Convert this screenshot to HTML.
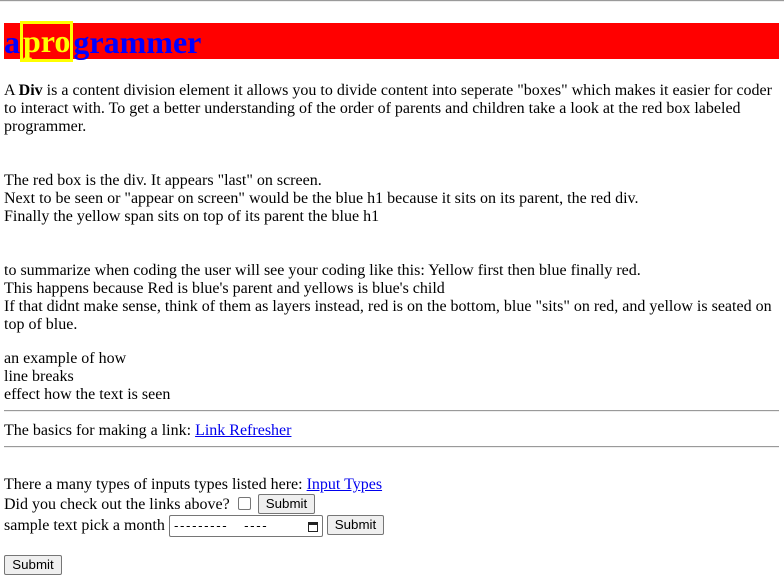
<!DOCTYPE html>
<html><head><style>
body{margin:0;width:784px;height:583px;position:relative;font-family:"Liberation Serif",serif;font-size:16px;color:#000;background:#fff;overflow:hidden}
.l{position:absolute;left:4px;white-space:nowrap;line-height:18px;margin-top:1px}
.hr{position:absolute;left:4px;width:775px;height:0;border-top:1px solid #9a9a9a;border-bottom:1px solid #eee}
a{color:#0000ee;text-decoration:underline}
.btn{position:absolute;font-family:"Liberation Sans",sans-serif;font-size:13.3px;background:#efefef;border:1px solid #767676;border-radius:2px;height:20px;box-sizing:border-box;text-align:center;line-height:18px;color:#000}
</style></head><body>
<div class="hr" style="top:0;left:0;width:784px"></div>
<div style="position:absolute;left:4px;top:23px;width:775px;height:36px;background:#f00"></div>
<div style="position:absolute;left:4px;top:21px;font:bold 32px 'Liberation Serif',serif;color:#00f;line-height:42px;white-space:nowrap">a<span style="display:inline-block;border:3px solid #ff0;color:#ff0;line-height:34px;box-sizing:border-box;height:41px;vertical-align:top">pro</span>grammer</div>
<div class="l" style="top:81px">A <b>Div</b> is a content division element it allows you to divide content into seperate "boxes" which makes it easier for coder</div>
<div class="l" style="top:99px">to interact with. To get a better understanding of the order of parents and children take a look at the red box labeled</div>
<div class="l" style="top:117px">programmer.</div>
<div class="l" style="top:171px">The red box is the div. It appears "last" on screen.</div>
<div class="l" style="top:189px">Next to be seen or "appear on screen" would be the blue h1 because it sits on its parent, the red div.</div>
<div class="l" style="top:207px">Finally the yellow span sits on top of its parent the blue h1</div>
<div class="l" style="top:261px">to summarize when coding the user will see your coding like this: Yellow first then blue finally red.</div>
<div class="l" style="top:279px">This happens because Red is blue's parent and yellows is blue's child</div>
<div class="l" style="top:297px">If that didnt make sense, think of them as layers instead, red is on the bottom, blue "sits" on red, and yellow is seated on</div>
<div class="l" style="top:315px">top of blue.</div>
<div class="l" style="top:349px">an example of how</div>
<div class="l" style="top:367px">line breaks</div>
<div class="l" style="top:385px">effect how the text is seen</div>
<div class="hr" style="top:410px"></div>
<div class="l" style="top:421px">The basics for making a link: <a>Link Refresher</a></div>
<div class="hr" style="top:446px"></div>
<div class="l" style="top:475px">There a many types of inputs types listed here: <a>Input Types</a></div>
<div class="l" style="top:495px">Did you check out the links above?</div>
<div style="position:absolute;left:238px;top:497px;width:13px;height:13px;box-sizing:border-box;border:1px solid #767676;border-radius:2px;background:#fff"></div>
<div class="btn" style="left:258px;top:494px;width:57px">Submit</div>
<div class="l" style="top:516px">sample text pick a month</div>
<div style="position:absolute;left:169px;top:515px;width:154px;height:22px;box-sizing:border-box;border:1px solid #767676;border-radius:2px;font-family:'Liberation Sans',sans-serif;font-size:13.3px;line-height:20px;padding-left:4px;letter-spacing:1.6px;white-space:nowrap">---------&nbsp;&nbsp;&nbsp;----
<svg style="position:absolute;right:4px;top:5px" width="10" height="11" viewBox="0 0 10 11"><rect x="0.5" y="1.5" width="9" height="9" fill="none" stroke="#222"/><rect x="0" y="1" width="10" height="3" fill="#222"/></svg></div>
<div class="btn" style="left:327px;top:515px;width:57px">Submit</div>
<div class="btn" style="left:4px;top:555px;width:58px">Submit</div>
</body></html>
